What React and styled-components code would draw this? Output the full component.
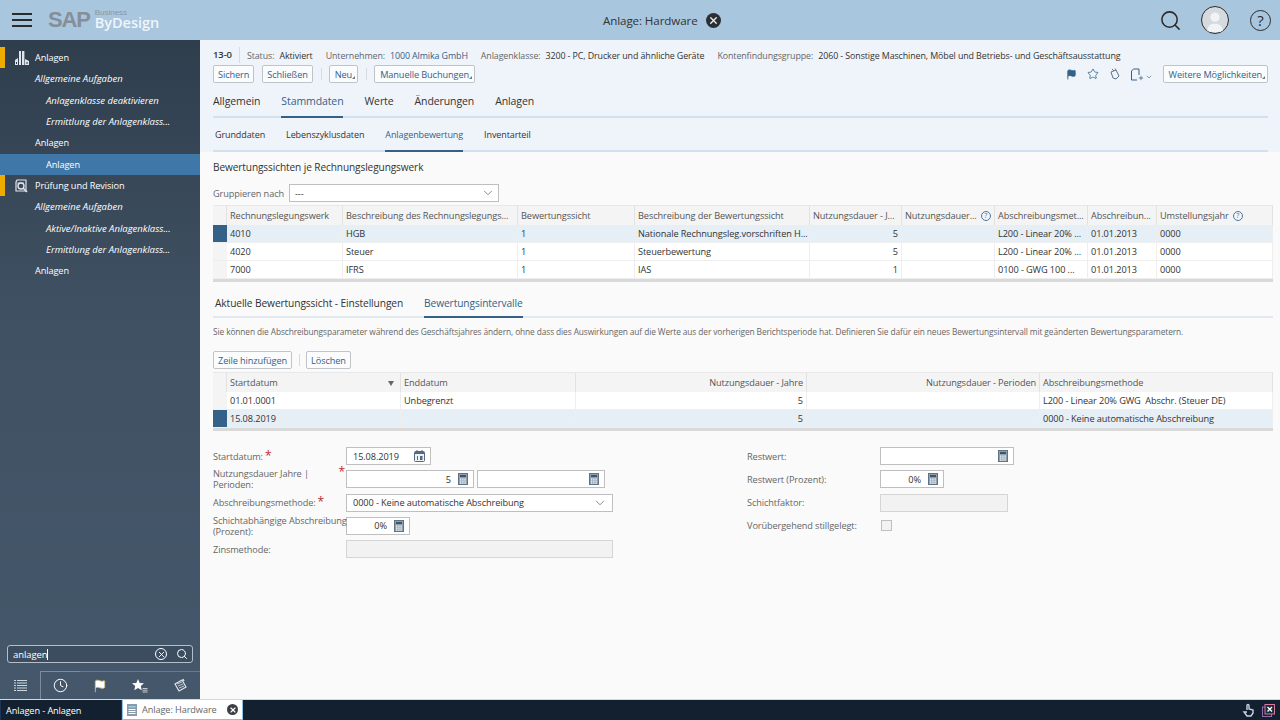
import React from "react";
import styled, { createGlobalStyle } from "styled-components";
import { Search, Star, ChevronDown, Clock, Flag, X, Plus } from "lucide-react";

const GlobalStyle = createGlobalStyle`
	html, body {
		margin: 0;
		padding: 0;
		width: 1280px;
		height: 720px;
		overflow: hidden;
		font-family: "Open Sans", "Noto Sans", "Liberation Sans", sans-serif;
		font-size: 9.2px;
		letter-spacing: -0.1px;
		color: #333;
	}
	* { box-sizing: border-box; }
`;

const sideItems = [
	{ text: "Anlagen", level: 0, icon: "building" },
	{ text: "Allgemeine Aufgaben", level: 1, italic: true },
	{ text: "Anlagenklasse deaktivieren", level: 2, italic: true },
	{ text: "Ermittlung der Anlagenklass...", level: 2, italic: true },
	{ text: "Anlagen", level: 1 },
	{ text: "Anlagen", level: 2, selected: true },
	{ text: "Prüfung und Revision", level: 0, icon: "audit" },
	{ text: "Allgemeine Aufgaben", level: 1, italic: true },
	{ text: "Aktive/Inaktive Anlagenklass...", level: 2, italic: true },
	{ text: "Ermittlung der Anlagenklass...", level: 2, italic: true },
	{ text: "Anlagen", level: 1 },
];

const topCols = "14px 116px 175px 117px 175px 92px 93px 93px 69px 116px";
const lowCols = "14px 174px 175px 231px 233px 233px";

function Calc() {
	return (
		<svg width="10" height="12" viewBox="0 0 10 12">
			<rect x="0.5" y="0.5" width="9" height="11" fill="#8fa0b0" stroke="#5f7286" />
			<rect x="2" y="2" width="6" height="2" fill="#3f5468" />
			{[2, 4.2, 6.4].map((x) =>
				[5.5, 7.5, 9.5].map((y) => <rect key={x + "-" + y} x={x} y={y} width="1.4" height="1.2" fill="#fff" />)
			)}
		</svg>
	);
}

function Cal() {
	return (
		<svg width="11" height="12" viewBox="0 0 11 12">
			<rect x="0.5" y="1.5" width="10" height="10" rx="1" fill="#eef2f5" stroke="#53697e" />
			<rect x="1" y="2" width="9" height="2" fill="#53697e" />
			<rect x="2.5" y="0" width="1" height="2.5" fill="#53697e" />
			<rect x="7.5" y="0" width="1" height="2.5" fill="#53697e" />
			<rect x="3" y="6" width="1" height="4" fill="#53697e" />
			<rect x="6" y="6" width="2.5" height="4" fill="#53697e" />
		</svg>
	);
}

function Help() {
	return <HelpMark>?</HelpMark>;
}

function SideIcon({ kind }) {
	if (kind === "building") {
		return (
			<svg width="16" height="16" viewBox="0 0 16 16">
				<path d="M1 15 L1 10 L4 8 L4 15 Z" fill="#dfe5ea" />
				<rect x="5" y="1" width="2" height="14" fill="#dfe5ea" />
				<rect x="8" y="1" width="2.4" height="14" fill="#dfe5ea" />
				<path d="M11 9 L15 11 L15 15 L11 15 Z" fill="#dfe5ea" />
				<rect x="2" y="12" width="1" height="2" fill="#2f3e4d" />
				<rect x="12.5" y="12" width="1" height="2" fill="#2f3e4d" />
			</svg>
		);
	}
	return (
		<svg width="14" height="14" viewBox="0 0 14 14" fill="none" stroke="#dfe5ea">
			<path d="M3 1 H12 V12 H2 V3 Z" strokeWidth="1.2" />
			<circle cx="7" cy="7" r="3" strokeWidth="1.4" />
			<path d="M9 9 L13 13" strokeWidth="1.6" />
			<path d="M3 4 H10" strokeWidth="0.8" />
		</svg>
	);
}

function App() {
	return (
		<Page>
			<GlobalStyle />
			<Header>
				<BrandArea>
					<Burger>
						<i />
						<i />
						<i />
					</Burger>
					<Logo>
						<LogoSap>SAP</LogoSap>
						<LogoWords>
							<LogoSmall>Business</LogoSmall>
							<LogoBig>ByDesign</LogoBig>
						</LogoWords>
					</Logo>
				</BrandArea>
				<HeaderTitle>
					Anlage: Hardware
					<CloseDot $size={15}>
						<X size={11} strokeWidth={3} color="#e8eef4" />
					</CloseDot>
				</HeaderTitle>
				<HeaderTools>
					<Search size={23} strokeWidth={1.6} color="#2b2b2b" />
					<Avatar>
						<svg width="28" height="28" viewBox="0 0 28 28">
							<circle cx="14" cy="11" r="5" fill="#f2f3f4" />
							<path d="M5 27 C6 19 10 18 14 18 C18 18 22 19 23 27 Z" fill="#f2f3f4" />
						</svg>
					</Avatar>
					<BigHelp>?</BigHelp>
				</HeaderTools>
			</Header>
			<Middle>
				<Sidebar>
					<SideList>
						{sideItems.map((item, i) => (
							<SideRow key={i} $level={item.level} $selected={item.selected} $italic={item.italic}>
								{item.level === 0 && <SideMark />}
								{item.icon && (
									<SideIconSlot>
										<SideIcon kind={item.icon} />
									</SideIconSlot>
								)}
								{item.text}
							</SideRow>
						))}
					</SideList>
					<SearchBox>
						<SearchText>
							anlagen
							<Caret />
						</SearchText>
						<SearchClear>
							<X size={9} strokeWidth={2.4} color="#fff" />
						</SearchClear>
						<Search size={12} strokeWidth={2} color="#fff" />
					</SearchBox>
					<SideTabs>
						<SideTab $first>
							<svg width="13" height="13" viewBox="0 0 13 13" fill="#cfd6dc">
								{[1, 3.5, 6, 8.5, 11].map((y) => (
									<g key={y}>
										<rect x="0" y={y} width="2" height="1" />
										<rect x="3" y={y} width="10" height="1" />
									</g>
								))}
							</svg>
						</SideTab>
						<SideTab $active>
							<Clock size={15} strokeWidth={1.6} color="#fff" />
						</SideTab>
						<SideTab>
							<Flag size={14} fill="#fff" color="#d9c27a" strokeWidth={1.5} />
						</SideTab>
						<SideTab>
							<svg width="16" height="14" viewBox="0 0 16 14">
								<path d="M6 0 L7.7 3.9 L12 4.3 L8.8 7.1 L9.7 11.3 L6 9.1 L2.3 11.3 L3.2 7.1 L0 4.3 L4.3 3.9 Z" fill="#fff" />
								<path d="M10.5 9.5 H15.5 M10.5 11.2 H15.5 M10.5 13 H15.5" stroke="#cfd6dc" strokeWidth="0.9" />
							</svg>
						</SideTab>
						<SideTab>
							<svg width="14" height="15" viewBox="0 0 14 15" fill="none" stroke="#dfe5ea">
								<path d="M2 6 L9 2 L13 9 L6 13 Z" strokeWidth="1.2" />
								<path d="M4 6 L9 4 M5 8 L10 6 M6 10 L11 8" strokeWidth="0.8" />
								<path d="M10 1 L11 3" strokeWidth="1.2" />
							</svg>
						</SideTab>
					</SideTabs>
				</Sidebar>
				<Main>
					<TopPanel>
						<InfoLine>
							<ObjectId>13-0</ObjectId>
							<InfoItem>
								Status:<b>Aktiviert</b>
							</InfoItem>
							<InfoItem>
								Unternehmen:<InfoLink>1000 Almika GmbH</InfoLink>
							</InfoItem>
							<InfoItem>
								Anlagenklasse:<b>3200 - PC, Drucker und ähnliche Geräte</b>
							</InfoItem>
							<InfoItem>
								Kontenfindungsgruppe:<b>2060 - Sonstige Maschinen, Möbel und Betriebs- und Geschäftsausstattung</b>
							</InfoItem>
						</InfoLine>
						<ActionBar>
							<Btn>Sichern</Btn>
							<Btn>Schließen</Btn>
							<Sep />
							<Btn $menu>Neu</Btn>
							<Sep />
							<Btn $menu>Manuelle Buchungen</Btn>
							<ActionIcons>
								<Flag size={11} fill="#346187" color="#346187" />
								<Star size={12} color="#346187" strokeWidth={1.6} />
								<svg width="11" height="12" viewBox="0 0 11 12" fill="none" stroke="#5f7286">
									<path d="M2 4 L7 2 L10 8 L7 11 L4 10 Z M3 1 L5 3 M6 0.5 L7 2" />
								</svg>
								<PinGroup>
									<svg width="13" height="13" viewBox="0 0 13 13" fill="none" stroke="#346187">
										<path d="M7 12 H1.5 V3 L3.5 1 H9 V7" />
									</svg>
									<Plus size={6} color="#346187" strokeWidth={3} />
									<ChevronDown size={8} color="#5f7286" />
								</PinGroup>
								<Btn $menu>Weitere Möglichkeiten</Btn>
							</ActionIcons>
						</ActionBar>
						<Tabs $big>
							<Tab $big>Allgemein</Tab>
							<Tab $big $active>Stammdaten</Tab>
							<Tab $big>Werte</Tab>
							<Tab $big>Änderungen</Tab>
							<Tab $big>Anlagen</Tab>
						</Tabs>
						<Tabs>
							<Tab>Grunddaten</Tab>
							<Tab>Lebenszyklusdaten</Tab>
							<Tab $active>Anlagenbewertung</Tab>
							<Tab>Inventarteil</Tab>
						</Tabs>
					</TopPanel>
					<Content>
						<SectionTitle>Bewertungssichten je Rechnungslegungswerk</SectionTitle>
						<GroupRow>
							<FieldLabel>Gruppieren nach</FieldLabel>
							<SelectBox $width={210}>
								---
								<ChevronDown size={14} color="#53697e" strokeWidth={1.3} />
							</SelectBox>
						</GroupRow>
						<Table>
							<HeadRow $cols={topCols}>
								<Cell $head />
								<Cell $head>Rechnungslegungswerk</Cell>
								<Cell $head>Beschreibung des Rechnungslegungs...</Cell>
								<Cell $head>Bewertungssicht</Cell>
								<Cell $head>Beschreibung der Bewertungssicht</Cell>
								<Cell $head>Nutzungsdauer - J...</Cell>
								<Cell $head>
									Nutzungsdauer...
									<Help />
								</Cell>
								<Cell $head>Abschreibungsmet...</Cell>
								<Cell $head>Abschreibun...</Cell>
								<Cell $head>
									Umstellungsjahr
									<Help />
								</Cell>
							</HeadRow>
							<BodyRow $cols={topCols} $selected>
								<Marker $on />
								<Cell>4010</Cell>
								<Cell>HGB</Cell>
								<Cell>1</Cell>
								<Cell>Nationale Rechnungsleg.vorschriften H...</Cell>
								<Cell $right>5</Cell>
								<Cell />
								<Cell>L200 - Linear 20% ...</Cell>
								<Cell>01.01.2013</Cell>
								<Cell>0000</Cell>
							</BodyRow>
							<BodyRow $cols={topCols}>
								<Marker />
								<Cell>4020</Cell>
								<Cell>Steuer</Cell>
								<Cell>1</Cell>
								<Cell>Steuerbewertung</Cell>
								<Cell $right>5</Cell>
								<Cell />
								<Cell>L200 - Linear 20% ...</Cell>
								<Cell>01.01.2013</Cell>
								<Cell>0000</Cell>
							</BodyRow>
							<BodyRow $cols={topCols}>
								<Marker />
								<Cell>7000</Cell>
								<Cell>IFRS</Cell>
								<Cell>1</Cell>
								<Cell>IAS</Cell>
								<Cell $right>1</Cell>
								<Cell />
								<Cell>0100 - GWG 100 ...</Cell>
								<Cell>01.01.2013</Cell>
								<Cell>0000</Cell>
							</BodyRow>
						</Table>
						<Tabs $inner>
							<Tab $small>Aktuelle Bewertungssicht - Einstellungen</Tab>
							<Tab $small $active>Bewertungsintervalle</Tab>
						</Tabs>
						<Hint>
							Sie können die Abschreibungsparameter während des Geschäftsjahres ändern, ohne dass dies Auswirkungen auf die Werte aus der vorherigen Berichtsperiode hat. Definieren Sie dafür ein neues Bewertungsintervall mit geänderten Bewertungsparametern.
						</Hint>
						<TableBar>
							<Btn>Zeile hinzufügen</Btn>
							<Sep />
							<Btn>Löschen</Btn>
						</TableBar>
						<Table>
							<HeadRow $cols={lowCols}>
								<Cell $head />
								<Cell $head>
									Startdatum
									<SortMark />
								</Cell>
								<Cell $head>Enddatum</Cell>
								<Cell $head $right>Nutzungsdauer - Jahre</Cell>
								<Cell $head $right>Nutzungsdauer - Perioden</Cell>
								<Cell $head>Abschreibungsmethode</Cell>
							</HeadRow>
							<BodyRow $cols={lowCols}>
								<Marker />
								<Cell>01.01.0001</Cell>
								<Cell>Unbegrenzt</Cell>
								<Cell $right>5</Cell>
								<Cell />
								<Cell>L200 - Linear 20% GWG&nbsp; Abschr. (Steuer DE)</Cell>
							</BodyRow>
							<BodyRow $cols={lowCols} $selected>
								<Marker $on />
								<Cell>15.08.2019</Cell>
								<Cell />
								<Cell $right>5</Cell>
								<Cell />
								<Cell>0000 - Keine automatische Abschreibung</Cell>
							</BodyRow>
						</Table>
						<Form>
							<FormColumn>
								<FormRow>
									<FormLabel>
										Startdatum:<Req>*</Req>
									</FormLabel>
									<Input $width={85}>
										15.08.2019
										<IconSlot $push>
											<Cal />
										</IconSlot>
									</Input>
								</FormRow>
								<FormRow>
									<FormLabel>
										Nutzungsdauer Jahre |<br />
										Perioden:<ReqEnd>*</ReqEnd>
									</FormLabel>
									<Input $width={128} $right>
										5
										<IconSlot>
											<Calc />
										</IconSlot>
									</Input>
									<Input $width={128} $right>
										<IconSlot>
											<Calc />
										</IconSlot>
									</Input>
								</FormRow>
								<FormRow>
									<FormLabel>
										Abschreibungsmethode:<Req>*</Req>
									</FormLabel>
									<Input $width={267}>
										0000 - Keine automatische Abschreibung
										<IconSlot $push>
											<ChevronDown size={14} color="#53697e" strokeWidth={1.3} />
										</IconSlot>
									</Input>
								</FormRow>
								<FormRow>
									<FormLabel>
										Schichtabhängige Abschreibung
										<br />
										(Prozent):
									</FormLabel>
									<Input $width={64} $right>
										0%
										<IconSlot>
											<Calc />
										</IconSlot>
									</Input>
								</FormRow>
								<FormRow>
									<FormLabel>Zinsmethode:</FormLabel>
									<Input $width={267} $disabled />
								</FormRow>
							</FormColumn>
							<FormColumn>
								<FormRow>
									<FormLabel>Restwert:</FormLabel>
									<Input $width={134} $right>
										<IconSlot>
											<Calc />
										</IconSlot>
									</Input>
								</FormRow>
								<FormRow>
									<FormLabel>Restwert (Prozent):</FormLabel>
									<Input $width={64} $right>
										0%
										<IconSlot>
											<Calc />
										</IconSlot>
									</Input>
								</FormRow>
								<FormRow>
									<FormLabel>Schichtfaktor:</FormLabel>
									<Input $width={128} $disabled />
								</FormRow>
								<FormRow>
									<FormLabel>Vorübergehend stillgelegt:</FormLabel>
									<CheckBox />
								</FormRow>
							</FormColumn>
						</Form>
					</Content>
				</Main>
			</Middle>
			<TaskBar>
				<TaskCurrent>Anlagen - Anlagen</TaskCurrent>
				<TaskTab>
					<svg width="10" height="12" viewBox="0 0 10 12">
						<rect width="10" height="12" fill="#8c9aa8" />
						<rect x="1.5" y="2" width="7" height="1.5" fill="#8fd0ec" />
						<rect x="1.5" y="5" width="7" height="1" fill="#fff" />
						<rect x="1.5" y="7" width="7" height="1" fill="#fff" />
						<rect x="1.5" y="9" width="7" height="1" fill="#fff" />
					</svg>
					<TaskTabText>Anlage: Hardware</TaskTabText>
					<CloseDot $size={11} $light>
						<X size={8} strokeWidth={3.4} color="#fff" />
					</CloseDot>
				</TaskTab>
				<TaskTools>
					<svg width="13" height="14" viewBox="0 0 13 14" fill="none" stroke="#c8d4e4" strokeWidth="1.4">
						<path d="M5 7 V2.5 C5 1 7 1 7 2.5 V6 L11 7 V10 L9 13 H5 L2 9 L5 9" />
					</svg>
					<svg width="13" height="13" viewBox="0 0 13 13">
						<rect x="0.5" y="3" width="9" height="9.5" fill="none" stroke="#8a6fb0" />
						<rect x="3" y="0.5" width="9.5" height="9.5" fill="#1a2b3e" stroke="#d67a9a" />
						<path d="M5.5 3 L10 7.5 M10 3 L5.5 7.5" stroke="#fff" strokeWidth="1.4" />
					</svg>
				</TaskTools>
			</TaskBar>
		</Page>
	);
}

const Page = styled.div`
	width: 1280px;
	height: 720px;
	display: flex;
	flex-direction: column;
	overflow: hidden;
`;

const Header = styled.header`
	height: 40px;
	flex: none;
	background: #a9c6df;
	display: grid;
	grid-template-columns: 603px auto 1fr;
	align-items: center;
`;

const BrandArea = styled.div`
	display: flex;
	align-items: center;
	padding-left: 12px;
	gap: 16px;
`;

const Burger = styled.div`
	display: flex;
	flex-direction: column;
	gap: 4px;

	i {
		display: block;
		width: 20px;
		height: 2px;
		background: #2b2b2b;
	}
`;

const Logo = styled.div`
	display: flex;
	align-items: center;
`;

const LogoSap = styled.span`
	font-family: "Liberation Sans", sans-serif;
	font-weight: 700;
	font-size: 22px;
	letter-spacing: -1.2px;
	color: #858f99;
`;

const LogoWords = styled.div`
	display: flex;
	flex-direction: column;
	margin-left: 5px;
	line-height: 1;
`;

const LogoSmall = styled.span`
	font-family: "Liberation Sans", sans-serif;
	font-size: 8px;
	letter-spacing: 0;
	color: #8a96a1;
	margin-bottom: -1px;
`;

const LogoBig = styled.span`
	font-size: 14.5px;
	font-weight: 600;
	letter-spacing: 0;
	color: #f0f5f9;
`;

const HeaderTitle = styled.div`
	display: flex;
	align-items: center;
	gap: 8px;
	font-size: 11.6px;
	color: #333;
`;

const CloseDot = styled.span`
	display: inline-flex;
	align-items: center;
	justify-content: center;
	flex: none;
	width: ${(p) => p.$size}px;
	height: ${(p) => p.$size}px;
	border-radius: 50%;
	background: ${(p) => (p.$light ? "#3b3f44" : "#2b2f33")};
`;

const HeaderTools = styled.div`
	display: flex;
	align-items: center;
	justify-content: flex-end;
	padding-right: 9px;
`;

const Avatar = styled.div`
	width: 28px;
	height: 28px;
	margin: 0 21px 0 19px;
	border: 1.5px solid #2b2b2b;
	border-radius: 50%;
	background: #d5dade;
	overflow: hidden;
	display: flex;
	align-items: center;
	justify-content: center;
`;

const BigHelp = styled.div`
	width: 21px;
	height: 21px;
	border: 1.5px solid #2b2b2b;
	border-radius: 50%;
	display: flex;
	align-items: center;
	justify-content: center;
	font-size: 15px;
	color: #2b2b2b;
`;

const Middle = styled.div`
	height: 659px;
	flex: none;
	display: flex;
`;

const Sidebar = styled.aside`
	width: 200px;
	flex: none;
	display: flex;
	flex-direction: column;
	padding-top: 7px;
	background: linear-gradient(180deg, #2f3e4d 0%, #3f5062 40%, #45586b 100%);
	color: #f0f3f6;
`;

const SideList = styled.div`
	flex: 1;
`;

const SideRow = styled.div`
	position: relative;
	height: 21.33px;
	display: flex;
	align-items: center;
	padding-left: ${(p) => (p.$level === 0 ? 14 : p.$level === 2 ? 46 : 35)}px;
	font-size: ${(p) => (p.$italic ? "9.5px" : "9.2px")};
	letter-spacing: ${(p) => (p.$italic ? "0" : "-0.1px")};
	font-style: ${(p) => (p.$italic ? "italic" : "normal")};
	background: ${(p) => (p.$selected ? "#3f77a9" : "transparent")};
	color: #fff;
`;

const SideMark = styled.span`
	position: absolute;
	left: 0;
	top: 0;
	bottom: 0;
	width: 5px;
	background: #f0ab00;
`;

const SideIconSlot = styled.span`
	width: 21px;
	display: inline-flex;
	align-items: center;
`;

const SearchBox = styled.div`
	height: 18px;
	margin: 0 7px 8px;
	border: 1.5px solid #b4bec8;
	border-radius: 3px;
	display: flex;
	align-items: center;
	gap: 9px;
	padding: 0 4px 0 5px;
	background: #3c4d5f;
`;

const SearchText = styled.div`
	flex: 1;
	font-size: 9.5px;
	color: #fff;
	display: flex;
	align-items: center;
`;

const Caret = styled.span`
	display: inline-block;
	width: 1px;
	height: 11px;
	background: #fff;
`;

const SearchClear = styled.span`
	width: 12px;
	height: 12px;
	border: 1px solid #fff;
	border-radius: 50%;
	display: flex;
	align-items: center;
	justify-content: center;
`;

const SideTabs = styled.div`
	height: 28px;
	flex: none;
	display: grid;
	grid-template-columns: repeat(5, 40px);
`;

const SideTab = styled.div`
	display: flex;
	align-items: center;
	justify-content: center;
	border-top: 1px solid ${(p) => (p.$first ? "transparent" : p.$active ? "#7d8c9b" : "#6a7a8a")};
	border-left: ${(p) => (p.$active ? "1px solid #7d8c9b" : "0")};
`;

const Main = styled.main`
	flex: 1;
	min-width: 0;
	display: flex;
	flex-direction: column;
	background: #fafafa;
`;

const TopPanel = styled.div`
	height: 112px;
	flex: none;
	padding: 7px 12px 0 13px;
	background: #eff4fa;
`;

const InfoLine = styled.div`
	height: 16px;
	display: flex;
	align-items: center;
	gap: 13px;
	font-size: 8.9px;
	white-space: nowrap;
	color: #666;
`;

const ObjectId = styled.span`
	font-weight: 600;
	font-size: 9.5px;
	color: #333;
	padding-right: 7px;
	margin-right: -6px;
	border-right: 1px solid #d6dde4;
	line-height: 16px;
`;

const InfoItem = styled.span`
	b {
		font-weight: 400;
		color: #333;
		margin-left: 5px;
	}
`;

const InfoLink = styled.span`
	color: #346187;
	margin-left: 5px;
`;

const ActionBar = styled.div`
	height: 18px;
	margin-top: 2px;
	display: flex;
	align-items: center;
	gap: 8px;
`;

const Btn = styled.button`
	position: relative;
	height: 18px;
	padding: 0 ${(p) => (p.$menu ? "5px" : "4px")};
	border: 1px solid #bfc4c9;
	border-radius: 2px;
	background: #fbfcfd;
	font-family: inherit;
	font-size: 9.2px;
	letter-spacing: -0.1px;
	color: #346187;
	white-space: nowrap;

	${(p) =>
		p.$menu &&
		`&::after {
			content: "";
			position: absolute;
			right: 2px;
			bottom: 3px;
			border-left: 3px solid transparent;
			border-bottom: 3px solid #6b7b8a;
		}`}
`;

const Sep = styled.span`
	width: 1px;
	height: 12px;
	margin-right: -1px;
	background: #d6dce2;
`;

const ActionIcons = styled.div`
	margin-left: auto;
	display: flex;
	align-items: center;
	gap: 10px;
`;

const PinGroup = styled.span`
	display: inline-flex;
	align-items: flex-end;
	gap: 1px;

	svg:nth-child(2) {
		margin-left: -6px;
	}
`;

const Tabs = styled.div`
	display: flex;
	gap: 21px;
	height: ${(p) => (p.$big ? "33px" : p.$inner ? "29px" : "34px")};
	margin-top: ${(p) => (p.$big ? "2px" : p.$inner ? "7px" : "0")};
	margin-bottom: ${(p) => (p.$inner ? "7px" : "0")};
	border-bottom: 2px solid ${(p) => (p.$inner ? "#e2e9f0" : "#d3e0ee")};
	padding-left: ${(p) => (p.$big ? "0" : "2px")};
`;

const Tab = styled.div`
	display: flex;
	align-items: center;
	height: calc(100% + 2px);
	font-size: ${(p) => (p.$small ? "10.2px" : p.$big ? "10.5px" : "9px")};
	color: ${(p) => (p.$active ? "#346187" : "#333")};
	border-bottom: 2px solid ${(p) => (p.$active ? "#346187" : "transparent")};
`;

const Content = styled.div`
	flex: 1;
	padding: 0 7px 0 13px;
`;

const SectionTitle = styled.h2`
	margin: 0;
	height: 30px;
	display: flex;
	align-items: center;
	font-size: 10.1px;
	font-weight: 400;
	color: #333;
`;

const GroupRow = styled.div`
	display: flex;
	align-items: center;
	gap: 6px;
	height: 18px;
	margin-top: 2px;
	margin-bottom: 3px;
`;

const FieldLabel = styled.span`
	width: 70px;
	color: #666;
	white-space: nowrap;
`;

const SelectBox = styled.div`
	width: ${(p) => p.$width}px;
	height: 18px;
	display: flex;
	align-items: center;
	justify-content: space-between;
	padding: 0 3px 0 5px;
	background: #fff;
	border: 1px solid #bfbfbf;
	color: #333;
`;

const Table = styled.div`
	border-bottom: 3px solid #d9d9d9;
`;

const HeadRow = styled.div`
	display: grid;
	grid-template-columns: ${(p) => p.$cols};
	height: 20px;
	background: #f4f4f4;
	border-top: 1px solid #e8e8e8;
`;

const BodyRow = styled.div`
	display: grid;
	grid-template-columns: ${(p) => p.$cols};
	height: 18px;
	background: ${(p) => (p.$selected ? "#e6eef6" : "#fff")};
	border-bottom: 1px solid #eeeeee;
`;

const Cell = styled.div`
	position: relative;
	min-width: 0;
	display: flex;
	align-items: center;
	justify-content: ${(p) => (p.$right ? "flex-end" : "flex-start")};
	padding: 0 3px;
	white-space: nowrap;
	overflow: hidden;
	color: ${(p) => (p.$head ? "#555" : "#333")};
	border-right: 1px solid ${(p) => (p.$head ? "#e2e2e2" : "#eeeeee")};
`;

const Marker = styled.div`
	background: ${(p) => (p.$on ? "#346187" : "#f4f4f4")};
`;

const HelpMark = styled.span`
	display: inline-flex;
	align-items: center;
	justify-content: center;
	flex: none;
	width: 10px;
	height: 10px;
	margin-left: 4px;
	border: 1px solid #427cac;
	border-radius: 50%;
	font-size: 7px;
	line-height: 1;
	color: #427cac;
`;

const SortMark = styled.span`
	position: absolute;
	right: 6px;
	top: 8px;
	border-left: 3px solid transparent;
	border-right: 3px solid transparent;
	border-top: 5px solid #666;
`;

const Hint = styled.p`
	margin: 0;
	height: 14px;
	line-height: 14px;
	font-size: 8.35px;
	color: #666;
	white-space: nowrap;
`;

const TableBar = styled.div`
	display: flex;
	align-items: center;
	gap: 7px;
	margin-top: 12px;
	margin-bottom: 3px;
`;

const Form = styled.div`
	display: grid;
	grid-template-columns: 534px 1fr;
	margin-top: 16px;
`;

const FormColumn = styled.div`
	display: flex;
	flex-direction: column;
	gap: 5.25px;
`;

const FormRow = styled.div`
	display: flex;
	align-items: center;
	gap: 3px;
	height: 18px;
`;

const FormLabel = styled.label`
	position: relative;
	width: 133px;
	margin-right: -3px;
	line-height: 11px;
	color: #666;
	white-space: nowrap;
`;

const Req = styled.span`
	color: #c0282d;
	font-size: 12px;
	line-height: 8px;
	margin-left: 2px;
`;

const ReqEnd = styled.span`
	position: absolute;
	top: -2px;
	right: 1px;
	color: #c0282d;
	font-size: 12px;
`;

const Input = styled.div`
	width: ${(p) => p.$width}px;
	height: 18px;
	display: flex;
	align-items: center;
	justify-content: ${(p) => (p.$right ? "flex-end" : "flex-start")};
	padding: 0 5px 0 6px;
	background: ${(p) => (p.$disabled ? "#f2f2f2" : "#fff")};
	border: 1px solid ${(p) => (p.$disabled ? "#d5d5d5" : "#bfbfbf")};
	color: #333;
`;

const IconSlot = styled.span`
	display: inline-flex;
	align-items: center;
	margin-left: ${(p) => (p.$push ? "auto" : "7px")};
`;

const CheckBox = styled.span`
	width: 11px;
	height: 11px;
	margin-left: 1px;
	background: #f2f2f2;
	border: 1px solid #bfbfbf;
`;

const TaskBar = styled.footer`
	height: 21px;
	flex: none;
	display: flex;
	align-items: stretch;
	background: #12202f;
	border-top: 1px solid #d8d8d8;
`;

const TaskCurrent = styled.div`
	width: 122px;
	display: flex;
	align-items: center;
	padding-left: 5px;
	color: #fff;
	background: #12202f;
	border-left: 1px solid #1d3557;
	border-right: 1px solid #1d3557;
`;

const TaskTab = styled.div`
	width: 121px;
	display: flex;
	align-items: center;
	gap: 5px;
	padding: 0 4px;
	background: #fff;
	border: 1px solid #8fc0e4;
	border-top: 0;
`;

const TaskTabText = styled.span`
	flex: 1;
	color: #666;
`;

const TaskTools = styled.div`
	margin-left: auto;
	display: flex;
	align-items: center;
	gap: 7px;
	padding-right: 5px;
`;

export default App;
